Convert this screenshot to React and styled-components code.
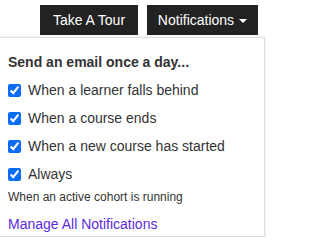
import React, { useState } from 'react';
import styled, { createGlobalStyle } from 'styled-components';

const GlobalStyle = createGlobalStyle`
  body {
    margin: 0;
    background: #fff;
    font-family: "Liberation Sans", Arial, sans-serif;
    color: #333;
  }
`;

const options = [
  { id: 'behind', label: 'When a learner falls behind' },
  { id: 'ends', label: 'When a course ends' },
  { id: 'started', label: 'When a new course has started' },
  { id: 'always', label: 'Always' },
];

const App = () => {
  const [checked, setChecked] = useState({ behind: true, ends: true, started: true, always: true });

  const toggle = (id) => setChecked((c) => ({ ...c, [id]: !c[id] }));

  return (
    <Page>
      <GlobalStyle />
      <Toolbar>
        <DarkButton $width={98}>Take A Tour</DarkButton>
        <DarkButton $width={111}>
          Notifications <Caret />
        </DarkButton>
      </Toolbar>
      <Menu>
        <Heading>Send an email once a day...</Heading>
        {options.map((o) => (
          <Option key={o.id}>
            <input type="checkbox" checked={checked[o.id]} onChange={() => toggle(o.id)} />
            <span>{o.label}</span>
          </Option>
        ))}
        <Hint>When an active cohort is running</Hint>
        <ManageLink href="#">Manage All Notifications</ManageLink>
      </Menu>
    </Page>
  );
};

const Page = styled.div`
  width: 266px;
`;

const Toolbar = styled.div`
  display: flex;
  justify-content: flex-end;
  gap: 9px;
  padding: 5px 8px 0 0;
`;

const DarkButton = styled.button`
  display: flex;
  align-items: center;
  justify-content: center;
  gap: 5px;
  width: ${(p) => p.$width}px;
  height: 30px;
  padding: 0;
  background: #222;
  color: #fff;
  border: none;
  border-radius: 0;
  font-family: "Liberation Sans", Arial, sans-serif;
  font-size: 14px;
  cursor: pointer;
`;

const Caret = styled.span`
  width: 0;
  height: 0;
  border-left: 4px solid transparent;
  border-right: 4px solid transparent;
  border-top: 4px solid #fff;
  margin-top: 1px;
`;

const Menu = styled.div`
  margin: 2px 1px 0 -2px;
  padding: 16px 10px 0 9px;
  height: 200px;
  box-sizing: border-box;
  border: 1px solid #ddd;
  box-shadow: 0 1px 3px rgba(0, 0, 0, 0.12);
`;

const Heading = styled.div`
  font-size: 14px;
  font-weight: bold;
  margin-bottom: 6px;
`;

const Option = styled.label`
  display: flex;
  align-items: center;
  gap: 7px;
  height: 28px;
  font-size: 14px;

  input {
    margin: 0;
    width: 13px;
    height: 13px;
    accent-color: #0b6cf4;
  }
`;

const Hint = styled.div`
  font-size: 12px;
  margin-top: 2px;
`;

const ManageLink = styled.a`
  display: block;
  margin-top: 12px;
  font-size: 14px;
  color: #5b2be0;
  text-decoration: none;
`;

export default App;
